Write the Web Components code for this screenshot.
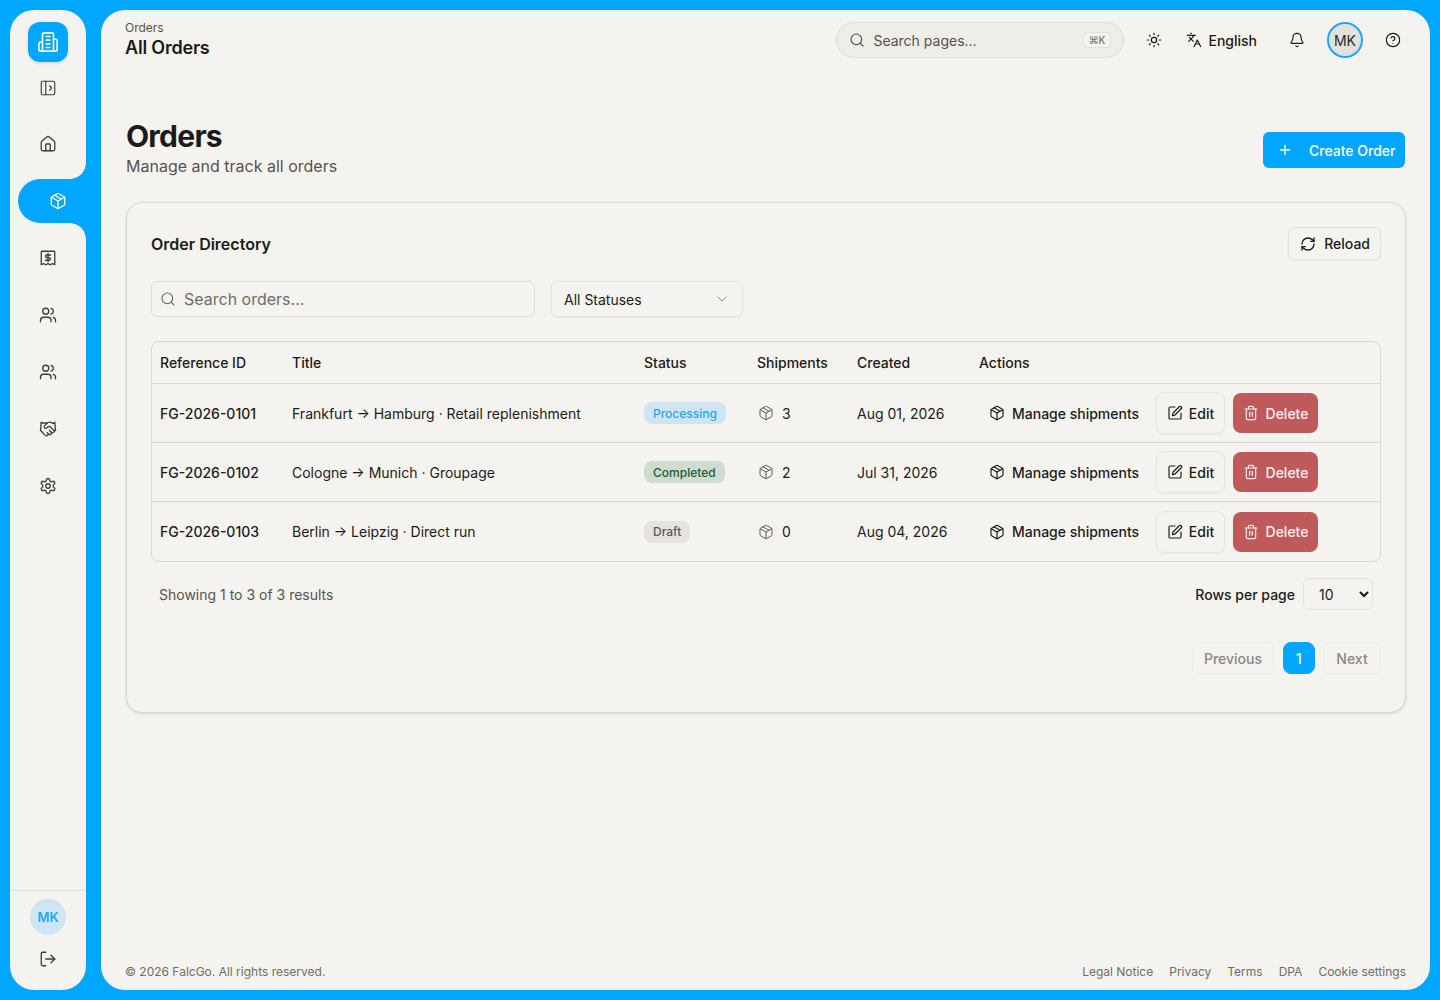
<!DOCTYPE html>
<html lang="en">
<head>
<meta charset="utf-8">
<title>Orders</title>
<style>
  html, body { margin: 0; height: 100%; }
  body {
    background: #00a6ff;
    color: #1c1b19;
    font-family: Inter, "Liberation Sans", sans-serif;
    font-size: 14px;
  }
  app-shell { height: 1000px; }
</style>
</head>
<body>
<app-shell>
  <app-sidebar slot="side"></app-sidebar>
  <app-topbar></app-topbar>
  <page-heading title="Orders" subtitle="Manage and track all orders"></page-heading>
  <order-directory>
    <order-row ref-id="FG-2026-0101" title-text="Frankfurt → Hamburg · Retail replenishment" status="Processing" shipments="3" created="Aug 01, 2026"></order-row>
    <order-row ref-id="FG-2026-0102" title-text="Cologne → Munich · Groupage" status="Completed" shipments="2" created="Jul 31, 2026"></order-row>
    <order-row ref-id="FG-2026-0103" title-text="Berlin → Leipzig · Direct run" status="Draft" shipments="0" created="Aug 04, 2026" last></order-row>
  </order-directory>
  <app-footer slot="footer"></app-footer>
</app-shell>

<script>
// lucide style strokes, all on a 24 box
const ICONS = {
  logo: '<path d="M6 22V4a2 2 0 0 1 2-2h8a2 2 0 0 1 2 2v18Z"/><path d="M6 12H4a2 2 0 0 0-2 2v6a2 2 0 0 0 2 2h2"/><path d="M18 9h2a2 2 0 0 1 2 2v9a2 2 0 0 1-2 2h-2"/><path d="M10 6h4M10 10h4M10 14h4M10 18h4"/>',
  panel: '<rect width="18" height="18" x="3" y="3" rx="2"/><path d="M9 3v18"/><path d="m14 9 3 3-3 3"/>',
  home: '<path d="M15 21v-8a1 1 0 0 0-1-1h-4a1 1 0 0 0-1 1v8"/><path d="M3 10a2 2 0 0 1 .709-1.528l7-5.999a2 2 0 0 1 2.582 0l7 5.999A2 2 0 0 1 21 10v9a2 2 0 0 1-2 2H5a2 2 0 0 1-2-2z"/>',
  box: '<path d="M11 21.73a2 2 0 0 0 2 0l7-4A2 2 0 0 0 21 16V8a2 2 0 0 0-1-1.73l-7-4a2 2 0 0 0-2 0l-7 4A2 2 0 0 0 3 8v8a2 2 0 0 0 1 1.73z"/><path d="M12 22V12"/><path d="m3.3 7 8.7 5 8.7-5"/><path d="m7.5 4.27 9 5.15"/>',
  receipt: '<path d="M4 3h16a1 1 0 0 1 1 1v17l-3-1.5-3 1.5-3-1.5L9 21l-3-1.5L3 21V4a1 1 0 0 1 1-1Z"/><path d="M15.5 8h-5a1.75 1.75 0 0 0 0 3.5h3a1.75 1.75 0 0 1 0 3.5h-5"/><path d="M12 6v11"/>',
  users: '<path d="M16 21v-2a4 4 0 0 0-4-4H6a4 4 0 0 0-4 4v2"/><circle cx="9" cy="7" r="4"/><path d="M22 21v-2a4 4 0 0 0-3-3.87"/><path d="M16 3.13a4 4 0 0 1 0 7.75"/>',
  handshake: '<path d="m11 17 2 2a1 1 0 1 0 3-3"/><path d="m14 14 2.5 2.5a1 1 0 1 0 3-3l-3.88-3.88a3 3 0 0 0-4.24 0l-.88.88a1 1 0 1 1-3-3l2.81-2.81a5.79 5.79 0 0 1 7.06-.87l.47.28a2 2 0 0 0 1.42.25L21 4"/><path d="m21 3 1 11h-2"/><path d="M3 3 2 14l6.5 6.5a1 1 0 1 0 3-3"/><path d="M3 4h8"/>',
  settings: '<path d="M12.22 2h-.44a2 2 0 0 0-2 2v.18a2 2 0 0 1-1 1.73l-.43.25a2 2 0 0 1-2 0l-.15-.08a2 2 0 0 0-2.73.73l-.22.38a2 2 0 0 0 .73 2.73l.15.1a2 2 0 0 1 1 1.72v.51a2 2 0 0 1-1 1.74l-.15.09a2 2 0 0 0-.73 2.73l.22.38a2 2 0 0 0 2.73.73l.15-.08a2 2 0 0 1 2 0l.43.25a2 2 0 0 1 1 1.73V20a2 2 0 0 0 2 2h.44a2 2 0 0 0 2-2v-.18a2 2 0 0 1 1-1.73l.43-.25a2 2 0 0 1 2 0l.15.08a2 2 0 0 0 2.73-.73l.22-.39a2 2 0 0 0-.73-2.73l-.15-.08a2 2 0 0 1-1-1.74v-.5a2 2 0 0 1 1-1.74l.15-.09a2 2 0 0 0 .73-2.73l-.22-.38a2 2 0 0 0-2.73-.73l-.15.08a2 2 0 0 1-2 0l-.43-.25a2 2 0 0 1-1-1.73V4a2 2 0 0 0-2-2z"/><circle cx="12" cy="12" r="3"/>',
  logout: '<path d="M9 21H5a2 2 0 0 1-2-2V5a2 2 0 0 1 2-2h4"/><path d="m16 17 5-5-5-5"/><path d="M21 12H9"/>',
  search: '<path d="m21 21-4.34-4.34"/><circle cx="11" cy="11" r="8"/>',
  sun: '<circle cx="12" cy="12" r="4"/><path d="M12 2v2M12 20v2M4.93 4.93l1.41 1.41M17.66 17.66l1.41 1.41M2 12h2M20 12h2M6.34 17.66l-1.41 1.41M19.07 4.93l-1.41 1.41"/>',
  languages: '<path d="m5 8 6 6"/><path d="m4 14 6-6 2-3"/><path d="M2 5h12"/><path d="M7 2h1"/><path d="m22 22-5-10-5 10"/><path d="M14 18h6"/>',
  bell: '<path d="M10.268 21a2 2 0 0 0 3.464 0"/><path d="M3.262 15.326A1 1 0 0 0 4 17h16a1 1 0 0 0 .74-1.673C19.41 13.956 18 12.499 18 8A6 6 0 0 0 6 8c0 4.499-1.411 5.956-2.738 7.326"/>',
  help: '<circle cx="12" cy="12" r="10"/><path d="M9.09 9a3 3 0 0 1 5.83 1c0 2-3 3-3 3"/><path d="M12 17h.01"/>',
  plus: '<path d="M5 12h14"/><path d="M12 5v14"/>',
  reload: '<path d="M3 12a9 9 0 0 1 9-9 9.75 9.75 0 0 1 6.74 2.74L21 8"/><path d="M21 3v5h-5"/><path d="M21 12a9 9 0 0 1-9 9 9.75 9.75 0 0 1-6.74-2.74L3 16"/><path d="M8 16H3v5"/>',
  chevron: '<path d="m6 9 6 6 6-6"/>',
  edit: '<path d="M12 3H5a2 2 0 0 0-2 2v14a2 2 0 0 0 2 2h14a2 2 0 0 0 2-2v-7"/><path d="M18.375 2.625a1 1 0 0 1 3 3l-9.013 9.014a2 2 0 0 1-.853.505l-2.873.84a.5.5 0 0 1-.62-.62l.84-2.873a2 2 0 0 1 .506-.852z"/>',
  trash: '<path d="M3 6h18"/><path d="M19 6v14a2 2 0 0 1-2 2H7a2 2 0 0 1-2-2V6"/><path d="M8 6V4a2 2 0 0 1 2-2h4a2 2 0 0 1 2 2v2"/><path d="M10 11v6"/><path d="M14 11v6"/>'
};

const icon = (name, size = 16, width = 2) =>
  `<svg xmlns="http://www.w3.org/2000/svg" width="${size}" height="${size}" viewBox="0 0 24 24" fill="none" stroke="currentColor" stroke-width="${width}" stroke-linecap="round" stroke-linejoin="round" style="display:block;flex:none">${ICONS[name]}</svg>`;

// small helper so each class stays short
class ShadowBase extends HTMLElement {
  render(html) {
    if (!this.shadowRoot) this.attachShadow({ mode: 'open' });
    this.shadowRoot.innerHTML = html;
  }
}

class AppShell extends ShadowBase {
  connectedCallback() {
    this.render(`
      <style>
        :host { display: flex; gap: 15px; padding: 10px; box-sizing: border-box; }
        main {
          flex: 1; min-width: 0; background: #f5f3ef; border-radius: 24px;
          display: flex; flex-direction: column; overflow: hidden;
        }
        .content { flex: 1; padding: 0 24px 0 25px; display: flex; flex-direction: column; }
      </style>
      <slot name="side"></slot>
      <main>
        <div class="content"><slot></slot></div>
        <slot name="footer"></slot>
      </main>`);
  }
}

class AppSidebar extends ShadowBase {
  connectedCallback() {
    const item = (name, extra = '') => `<a class="item ${extra}">${icon(name, 18, 1.75)}</a>`;
    this.render(`
      <style>
        :host {
          display: flex; flex-direction: column; width: 76px; flex: none;
          background: #f5f3ef; border-radius: 24px; color: #3d3c39;
        }
        .logo {
          width: 40px; height: 40px; margin: 12px auto 0; border-radius: 12px; background: #00a6ff;
          color: #fff; display: flex; align-items: center; justify-content: center;
          box-shadow: 0 1px 3px rgba(0,0,0,.15);
        }
        .toggle { height: 18px; margin-top: 17px; display: flex; justify-content: center; }
        nav { display: flex; flex-direction: column; margin-top: 18px; }
        .item { height: 57px; display: flex; align-items: center; justify-content: center; }
        .active {
          position: relative; height: 44px; margin: 0 -15px 0 8px; padding-left: 0; padding-right: 15px; box-sizing: border-box;
          padding-left: 12px; margin-top: 7px; margin-bottom: 6px;
          background: #00a6ff; color: #fff; border-radius: 22px 0 0 22px;
        }
        .active::before, .active::after {
          content: ""; position: absolute; right: 15px; width: 16px; height: 16px;
        }
        .active::before { top: -16px; background: radial-gradient(circle at 0 0, transparent 15.5px, #00a6ff 16px); }
        .active::after { bottom: -16px; background: radial-gradient(circle at 0 100%, transparent 15.5px, #00a6ff 16px); }
        .bottom { margin-top: auto; border-top: 1px solid #e2e1dd; display: flex; flex-direction: column; align-items: center; }
        .me {
          width: 36px; height: 36px; margin-top: 8px; border-radius: 50%; background: #cfe5f2; color: #1ea7fb;
          font-size: 13px; font-weight: 600; display: flex; align-items: center; justify-content: center;
        }
        .out { margin: 15px 0 22px; }
      </style>
      <div class="logo">${icon('logo', 22, 1.75)}</div>
      <div class="toggle">${icon('panel', 18, 1.5)}</div>
      <nav>
        ${item('home')}
        ${item('box', 'active')}
        ${item('receipt')}${item('users')}${item('users')}${item('handshake')}${item('settings')}
      </nav>
      <div class="bottom">
        <div class="me">MK</div>
        <div class="out">${icon('logout', 18, 1.75)}</div>
      </div>`);
  }
}

class AppTopbar extends ShadowBase {
  connectedCallback() {
    this.render(`
      <style>
        :host { display: flex; align-items: flex-start; height: 60px; margin-left: -1px; margin-right: -5px; }
        .crumbs { padding-top: 11px; flex: 1; }
        .crumb { font-size: 12px; line-height: 14px; color: #55534f; }
        .page { font-size: 18px; line-height: 24px; font-weight: 600; letter-spacing: -.2px; color: #1c1b19; margin-top: 1px; }
        .search {
          width: 288px; height: 36px; box-sizing: border-box; margin-top: 12px; padding: 0 12px;
          display: flex; align-items: center; gap: 8px; background: #eeede8; border: 1px solid #dcdbd6;
          border-radius: 18px; color: #55534f;
        }
        .search span { flex: 1; }
        kbd {
          font: 500 10px Inter, sans-serif; color: #77756f; background: #f5f3ef; border: 1px solid #e2e1dc;
          border-radius: 4px; padding: 1px 5px; line-height: 12px;
        }
        .tools { display: flex; align-items: center; height: 36px; margin-top: 12px; color: #1c1b19; }
        .sun { margin-left: 22px; }
        .lang { display: flex; align-items: center; gap: 6px; margin-left: 24px; font-weight: 500; }
        .bell { margin-left: 32px; }
        .avatar {
          width: 36px; height: 36px; box-sizing: border-box; margin-left: 22px; border-radius: 50%; background: #e2e1dc;
          border: 2px solid #1ea7fb; display: flex; align-items: center; justify-content: center; color: #2b2a28;
        }
        .help { margin-left: 22px; margin-right: 10px; }
      </style>
      <div class="crumbs">
        <div class="crumb">Orders</div>
        <div class="page">All Orders</div>
      </div>
      <div class="search">${icon('search', 16, 1.75)}<span>Search pages...</span><kbd>⌘K</kbd></div>
      <div class="tools">
        <div class="sun">${icon('sun', 16, 1.75)}</div>
        <div class="lang">${icon('languages', 16, 1.75)}English</div>
        <div class="bell">${icon('bell', 16, 1.75)}</div>
        <div class="avatar">MK</div>
        <div class="help">${icon('help', 16, 1.75)}</div>
      </div>`);
  }
}

class PageHeading extends ShadowBase {
  connectedCallback() {
    this.render(`
      <style>
        :host { display: flex; align-items: flex-end; justify-content: space-between; margin-top: 48px; height: 60px; margin-bottom: 24px; margin-right: 1px; }
        h1 { margin: 0; font-size: 30px; line-height: 36px; font-weight: 700; letter-spacing: -.75px; color: #1c1b19; }
        p { margin: 0; font-size: 16px; line-height: 24px; color: #55534f; }
        button {
          height: 36px; width: 142px; margin-bottom: 10px; border: 0; border-radius: 6px; background: #00a6ff; color: #fff;
          font: 500 14px Inter, sans-serif; display: flex; align-items: center; gap: 16px; padding: 0 0 0 14px;
        }
      </style>
      <div>
        <h1>${this.getAttribute('title')}</h1>
        <p>${this.getAttribute('subtitle')}</p>
      </div>
      <button>${icon('plus', 16)}Create Order</button>`);
  }
}

class OrderDirectory extends ShadowBase {
  connectedCallback() {
    this.render(`
      <style>
        :host {
          display: block; height: 511px; box-sizing: border-box; padding: 24px; border: 1px solid #d8d7d2; border-radius: 16px;
          background: #f5f3ef; box-shadow: 0 1px 3px rgba(0,0,0,.12);
        }
        .head { display: flex; align-items: center; justify-content: space-between; height: 33px; }
        h2 { margin: 0; font-size: 16px; font-weight: 600; color: #1c1b19; }
        .ghost {
          display: flex; align-items: center; gap: 8px; height: 33px; box-sizing: border-box; padding: 0 10px 0 11px; background: #f5f3ef;
          border: 1px solid #e3e2dd; border-radius: 6px; font: 500 14px Inter, sans-serif; color: #1c1b19;
          box-shadow: 0 1px 2px rgba(0,0,0,.05);
        }
        .filters { display: flex; gap: 16px; margin-top: 21px; }
        .find {
          width: 384px; height: 36px; box-sizing: border-box; display: flex; align-items: center; gap: 8px; padding: 0 8px;
          border: 1px solid #dedcd7; border-radius: 6px; font-size: 16px; color: #6f6d68;
        }
        .status {
          width: 192px; height: 36px; box-sizing: border-box; display: flex; align-items: center; justify-content: space-between;
          padding: 0 12px; border: 1px solid #e3e2dd; border-radius: 6px; box-shadow: 0 1px 2px rgba(0,0,0,.05); color: #1c1b19;
        }
        .status svg { color: #8f8d88; }
        .table { margin-top: 24px; border: 1px solid #d8d7d2; border-radius: 8px; }
        .cols {
          display: grid; grid-template-columns: 132px 352px 113px 100px 122px 1fr; height: 41px; align-items: center;
          padding-left: 8px; border-bottom: 1px solid #d8d7d2; font-weight: 500; color: #1c1b19;
        }
        .foot { display: flex; align-items: center; justify-content: space-between; margin-top: 16px; padding: 0 8px; height: 32px; }
        .count { color: #55534f; }
        .per { display: flex; align-items: center; gap: 8px; font-weight: 500; }
        select {
          width: 70px; height: 32px; padding: 0 8px 0 11px; background: #f5f3ef; border: 1px solid #e3e2dd; border-radius: 6px;
          font: 400 14px Inter, sans-serif; color: #1c1b19;
        }
        .pages { display: flex; justify-content: flex-end; gap: 9px; margin-top: 32px; padding-right: 1px; }
        .pages div {
          height: 32px; box-sizing: border-box; display: flex; align-items: center; justify-content: center;
          border: 1px solid #edebe7; border-radius: 6px; color: #8a8884; font-weight: 500;
        }
        .prev { width: 82px; } .next { width: 56px; }
        .pages .cur { width: 32px; background: #00a6ff; border-color: #00a6ff; color: #fff; border-radius: 8px; }
      </style>
      <div class="head">
        <h2>Order Directory</h2>
        <button class="ghost">${icon('reload', 16)}Reload</button>
      </div>
      <div class="filters">
        <div class="find">${icon('search', 16, 1.75)}Search orders...</div>
        <div class="status">All Statuses ${icon('chevron', 16, 1.5)}</div>
      </div>
      <div class="table">
        <div class="cols"><div>Reference ID</div><div>Title</div><div>Status</div><div>Shipments</div><div>Created</div><div>Actions</div></div>
        <slot></slot>
      </div>
      <div class="foot">
        <div class="count">Showing 1 to 3 of 3 results</div>
        <div class="per">Rows per page <select><option>10</option><option>25</option></select></div>
      </div>
      <div class="pages"><div class="prev">Previous</div><div class="cur">1</div><div class="next">Next</div></div>`);
  }
}

class StatusBadge extends ShadowBase {
  connectedCallback() {
    const tone = {
      Processing: ['#cfe5f2', '#1ea7fb'],
      Completed: ['#cfdcd0', '#1d5b32'],
      Draft: ['#e4e3df', '#5c5a56']
    }[this.textContent.trim()];
    this.render(`
      <style>
        :host {
          display: inline-flex; align-items: center; height: 22px; padding: 0 9px; border-radius: 8px;
          font-size: 12px; font-weight: 500; background: ${tone[0]}; color: ${tone[1]};
        }
      </style>
      <slot></slot>`);
  }
}

class OrderRow extends ShadowBase {
  connectedCallback() {
    const a = n => this.getAttribute(n);
    this.render(`
      <style>
        :host {
          display: grid; grid-template-columns: 132px 352px 113px 100px 122px 1fr; align-items: center; height: 59px;
          box-sizing: border-box; padding-left: 8px; color: #1c1b19;
          ${this.hasAttribute('last') ? '' : 'border-bottom: 1px solid #d8d7d2;'}
        }
        .id { font-weight: 500; }
        .num { display: flex; align-items: center; gap: 8px; padding-left: 1px; }
        .num svg { color: #5c5a56; }
        .acts { display: flex; align-items: center; font-weight: 500; }
        .manage { display: flex; align-items: center; gap: 7px; margin-left: 10px; width: 167px; }
        .edit, .del { display: flex; align-items: center; justify-content: center; gap: 6px; height: 40px; box-sizing: border-box; border-radius: 8px; }
        .edit { width: 69px; height: 42px; border: 1px solid #e6e5e0; box-shadow: 0 1px 2px rgba(0,0,0,.05); }
        .del { width: 85px; margin-left: 8px; background: #bf5a5c; color: #f9eeee; gap: 7px; }
      </style>
      <div class="id">${a('ref-id')}</div>
      <div>${a('title-text')}</div>
      <div><status-badge>${a('status')}</status-badge></div>
      <div class="num">${icon('box', 16, 1.5)}${a('shipments')}</div>
      <div>${a('created')}</div>
      <div class="acts">
        <div class="manage">${icon('box', 16, 1.75)}Manage shipments</div>
        <div class="edit">${icon('edit', 16, 1.75)}Edit</div>
        <div class="del">${icon('trash', 16, 1.75)}Delete</div>
      </div>`);
  }
}

class AppFooter extends ShadowBase {
  connectedCallback() {
    this.render(`
      <style>
        :host {
          display: flex; justify-content: space-between; align-items: center; height: 20px; padding: 0 24px; margin-bottom: 9px;
          font-size: 12px; color: #6f6d68;
        }
        .links { display: flex; gap: 16px; }
      </style>
      <div>© 2026 FalcGo. All rights reserved.</div>
      <div class="links"><span>Legal Notice</span><span>Privacy</span><span>Terms</span><span>DPA</span><span>Cookie settings</span></div>`);
  }
}

customElements.define('status-badge', StatusBadge);
customElements.define('order-row', OrderRow);
customElements.define('order-directory', OrderDirectory);
customElements.define('page-heading', PageHeading);
customElements.define('app-topbar', AppTopbar);
customElements.define('app-sidebar', AppSidebar);
customElements.define('app-footer', AppFooter);
customElements.define('app-shell', AppShell);
</script>
</body>
</html>
